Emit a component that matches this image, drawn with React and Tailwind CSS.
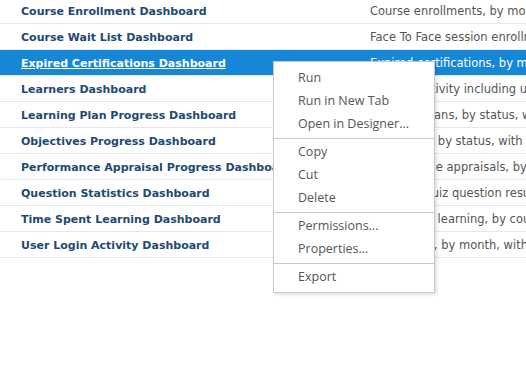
const rows = [
  { name: "Course Enrollment Dashboard", desc: "Course enrollments, by month, with status and completion" },
  { name: "Course Wait List Dashboard", desc: "Face To Face session enrollments on wait lists" },
  { name: "Expired Certifications Dashboard", desc: "Expired certifications, by month and by user", selected: true },
  { name: "Learners Dashboard", desc: "Learner activity including user logins and completions" },
  { name: "Learning Plan Progress Dashboard", desc: "Learning plans, by status, with progress" },
  { name: "Objectives Progress Dashboard", desc: "Objectives, by status, with trends" },
  { name: "Performance Appraisal Progress Dashboard", desc: "Performance appraisals, by status" },
  { name: "Question Statistics Dashboard", desc: "Quiz and quiz question results" },
  { name: "Time Spent Learning Dashboard", desc: "Time spent learning, by course" },
  { name: "User Login Activity Dashboard", desc: "User logins, by month, with trends" },
];

const groups = [
  ["Run", "Run in New Tab", "Open in Designer..."],
  ["Copy", "Cut", "Delete"],
  ["Permissions...", "Properties..."],
  ["Export"],
];

const App = () => {
  return (
    <div className="relative w-[526px] h-[376px] overflow-hidden bg-white font-['DejaVu_Sans',sans-serif]">
      {/* Dashboard list */}
      <div className="-mt-[2px]">
        {rows.map((row) => (
          <div
            key={row.name}
            className={`flex h-[26px] items-center pt-[3px] border-b border-[#e4e7eb] whitespace-nowrap ${
              row.selected ? "bg-[#1686d6]" : "bg-white"
            }`}
          >
            <div
              className={`w-[370px] shrink-0 pl-[21px] text-[11px] font-bold overflow-hidden ${
                row.selected ? "text-white underline" : "text-[#204a72]"
              }`}
            >
              {row.name}
            </div>
            <div className={`text-[11.5px] ${row.selected ? "text-white" : "text-[#555]"}`}>{row.desc}</div>
          </div>
        ))}
      </div>

      {/* Context menu */}
      <div className="absolute left-[273px] top-[61px] w-[162px] border border-[#c8c8c8] bg-white pt-[4px] pb-[4px] shadow-[2px_2px_3px_rgba(0,0,0,0.12)] font-['Open_Sans',sans-serif] text-[12.5px] text-[#555]">
        {groups.map((items, i) => (
          <div key={i}>
            {i > 0 && <div className="mt-[3px] mb-px h-px bg-[#c8c8c8]" />}
            {items.map((item) => (
              <div key={item} className="flex h-[23px] items-center pt-px pl-[24px]">
                {item}
              </div>
            ))}
          </div>
        ))}
      </div>
    </div>
  );
};

export default App;
